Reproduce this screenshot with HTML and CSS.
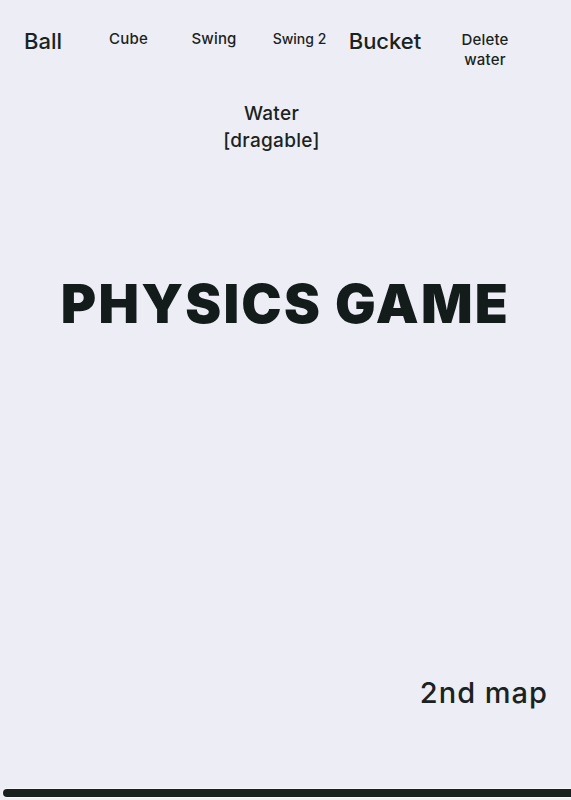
FILE: index.html
```html
<!DOCTYPE html>
<html lang="en">
<head>
<meta charset="utf-8">
<title>Physics Game</title>
<link rel="stylesheet" href="styles.css">
</head>
<body>
<div class="page">
  <nav class="toolbar">
    <button class="tool tool-lg tool-ball">Ball</button>
    <button class="tool tool-cube">Cube</button>
    <button class="tool tool-swing">Swing</button>
    <button class="tool tool-sm tool-swing2">Swing 2</button>
    <button class="tool tool-lg tool-bucket">Bucket</button>
    <button class="tool tool-delete">Delete<br>water</button>
  </nav>
  <div class="water-row">
    <button class="tool tool-water">Water<br>[dragable]</button>
  </div>
  <h1 class="title">PHYSICS GAME</h1>
  <div class="map-row">
    <button class="tool tool-map">2nd map</button>
  </div>
  <div class="ground"></div>
</div>
</body>
</html>
```

FILE: styles.css
```css
html, body {
  margin: 0;
  padding: 0;
  background: #edeef5;
}

.page {
  width: 571px;
  height: 800px;
  display: flex;
  flex-direction: column;
  font-family: Inter, "Noto Sans", sans-serif;
  color: #1a2322;
  overflow: hidden;
}

.tool {
  background: none;
  border: none;
  padding: 0;
  font-family: inherit;
  font-weight: 450;
  color: inherit;
  text-align: center;
  cursor: pointer;
}

.toolbar {
  display: grid;
  grid-template-columns: 86px 85px 86px 85px 86px 114px;
  align-items: start;
  padding-top: 27px;
  height: 56px;
}

.tool-ball,
.tool-bucket {
  font-size: 22px;
  line-height: 28px;
}

.tool-cube,
.tool-swing {
  font-size: 15px;
  line-height: 24px;
  letter-spacing: 0.2px;
}

.tool-swing2 {
  font-size: 14px;
  line-height: 24px;
}

.tool-delete {
  font-size: 15px;
  line-height: 20px;
  padding-top: 3px;
  letter-spacing: 0.2px;
}

.water-row {
  display: flex;
  justify-content: center;
  padding-right: 28px;
  margin-top: 17px;
}

.tool-water {
  font-size: 19px;
  line-height: 27px;
  letter-spacing: 0.3px;
}

.title {
  margin: 120px 0 0;
  text-align: center;
  font-family: Inter, "Liberation Sans", sans-serif;
  font-weight: 900;
  font-size: 54px;
  line-height: 60px;
  letter-spacing: 2.2px;
  color: #131c1b;
}

.map-row {
  display: flex;
  justify-content: flex-end;
  padding-right: 23px;
  margin-top: auto;
}

.tool-map {
  font-size: 29px;
  line-height: 36px;
  letter-spacing: 1px;
}

.ground {
  margin: 78px 0 3px 3px;
  height: 8px;
  background: #17201f;
  border-radius: 4px 0 0 4px;
  box-shadow: 0 0 0 1px #f6f7fb;
}
```
